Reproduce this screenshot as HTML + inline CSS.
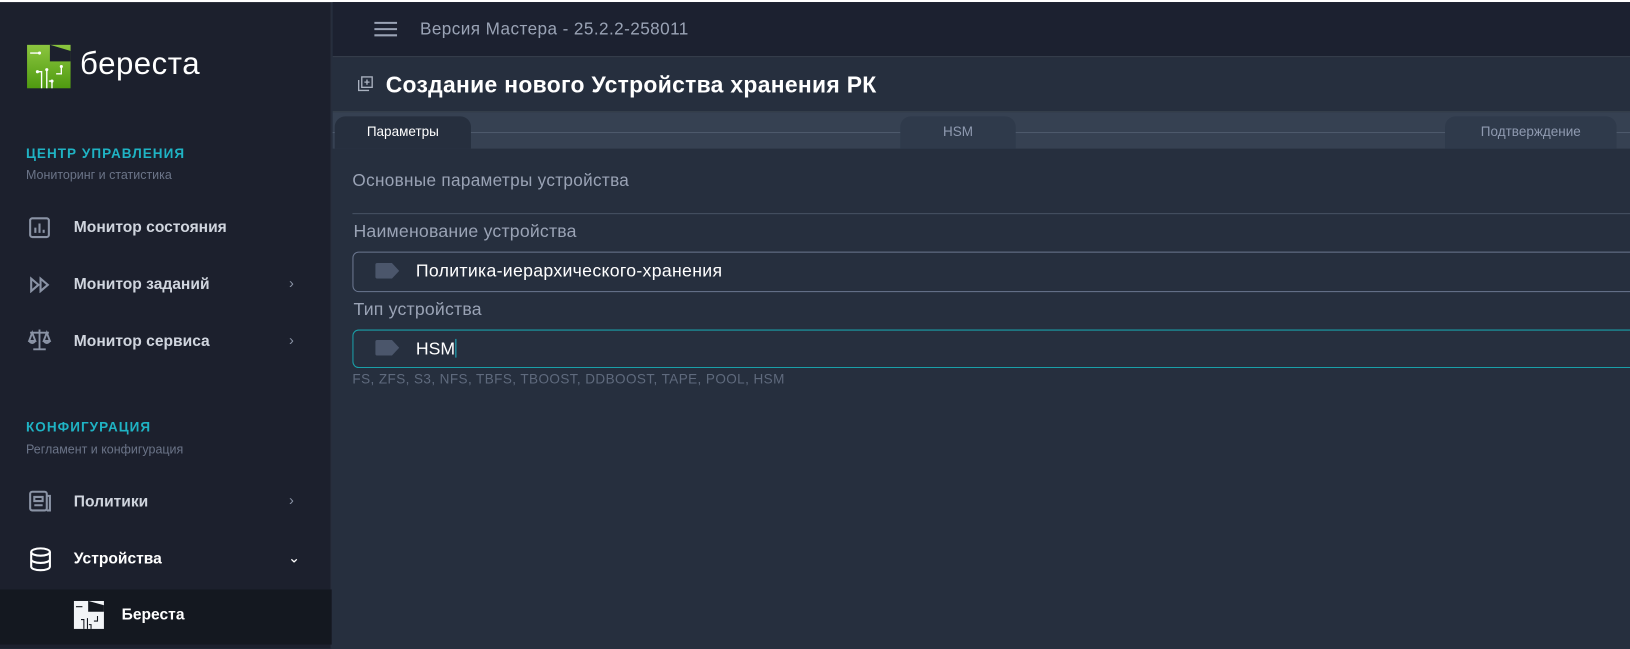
<!DOCTYPE html>
<html><head><meta charset="utf-8"><style>
*{margin:0;padding:0;box-sizing:border-box}
html,body{width:1630px;height:649px;overflow:hidden;background:#262f3e}
body{font-family:"Liberation Sans","DejaVu Sans",sans-serif;position:relative}
#wrap{position:absolute;left:0;top:0;width:1568px;height:624px;overflow:hidden;transform:scale(1.0396);transform-origin:0 0}
.abs{position:absolute}
#top{left:0;top:0;width:1568px;height:2px;background:#fff}
#side{left:0;top:2px;width:319px;height:622px;background:#1c202d;border-right:1px solid #2a3140}
#hdr{left:320px;top:2px;width:1248px;height:53px;background:#1c2130;border-bottom:1px solid #39414f}
#ttl{left:320px;top:56px;width:1248px;height:52px;background:#262f3e;border-bottom:1px solid #39434f}
#tabs{left:320px;top:108px;width:1248px;height:35px;background:#364152}
.tab{position:absolute;top:4px;height:31px;border-radius:10px 10px 0 0;text-align:center;font-size:13px;line-height:30px}
.sec{color:#1fb3c4;font-weight:bold;font-size:13px;letter-spacing:1px;left:25px}
.sub{color:#6b7488;font-size:12px;left:25px}
.item{left:71px;color:#d0d5de;font-size:15px;font-weight:bold}
.chev{left:278px;color:#8a93a5;font-size:14px}
.inp{left:339px;width:1240px;border-radius:6px;border:1px solid #6b7790}
</style></head><body><div id="wrap">
<div class="abs" id="side"></div>
<div class="abs" id="top"></div>
<svg class="abs" style="left:26px;top:43px" width="42" height="42" viewBox="0 0 42 42">
<defs><linearGradient id="g" x1="0" y1="0" x2="0" y2="1"><stop offset="0" stop-color="#8cc63f"/><stop offset="1" stop-color="#4f9a10"/></linearGradient></defs>
<rect width="42" height="42" fill="url(#g)"/>
<path d="M22 0L42 6V16H22Z" fill="#1c202d"/>
<g stroke="#fff" stroke-width="1.3" fill="none"><path d="M3 8H12M10 26H14V42M19 24V42M21 35H24V42M28 28H33V21"/></g>
<g fill="#fff"><circle cx="12" cy="8" r="1.5"/><circle cx="10" cy="26" r="1.5"/><circle cx="19" cy="24" r="1.5"/><circle cx="24" cy="35" r="1.5"/><circle cx="33" cy="21" r="1.5"/></g>
</svg>
<div class="abs" style="left:77px;top:45px;color:#fff;font-size:30px;letter-spacing:0.5px">береста</div>
<div class="abs sec" style="top:140px">ЦЕНТР УПРАВЛЕНИЯ</div>
<div class="abs sub" style="top:161px">Мониторинг и статистика</div>
<svg class="abs" style="left:27px;top:208px" width="22" height="22" viewBox="0 0 22 22" fill="none" stroke="#8a93a5" stroke-width="2"><rect x="2" y="2" width="18" height="18" rx="2"/><path d="M7 16V11M11 16V7M15 16V13"/></svg>
<div class="abs item" style="top:210px">Монитор состояния</div>
<svg class="abs" style="left:28px;top:266px" width="22" height="16" viewBox="0 0 22 16" fill="none" stroke="#8a93a5" stroke-width="2"><path d="M2 2V14L9 8Z M11 2V14L18 8Z"/></svg>
<div class="abs item" style="top:265px">Монитор заданий</div><div class="abs chev" style="top:264px">›</div>
<svg class="abs" style="left:26px;top:316px" width="24" height="22" viewBox="0 0 24 22" fill="none" stroke="#8a93a5" stroke-width="1.8"><path d="M12 1V20M6 20H18M3 4H21M5 4L2 12H8ZM19 4L16 12H22Z M2 12Q5 16 8 12M16 12Q19 16 22 12"/></svg>
<div class="abs item" style="top:320px">Монитор сервиса</div><div class="abs chev" style="top:319px">›</div>
<div class="abs sec" style="top:403px">КОНФИГУРАЦИЯ</div>
<div class="abs sub" style="top:425px">Регламент и конфигурация</div>
<svg class="abs" style="left:27px;top:471px" width="24" height="22" viewBox="0 0 24 22" fill="none" stroke="#8a93a5" stroke-width="2"><rect x="2" y="2" width="16" height="18" rx="2"/><path d="M18 6H21V20H18M6 7H14V11H6ZM6 15H14"/></svg>
<div class="abs item" style="top:474px">Политики</div><div class="abs chev" style="top:473px">›</div>
<svg class="abs" style="left:28px;top:526px" width="22" height="24" viewBox="0 0 22 24" fill="none" stroke="#fff" stroke-width="2"><ellipse cx="11" cy="5" rx="9" ry="3.5"/><path d="M2 5V19C2 21 6 22.5 11 22.5S20 21 20 19V5M2 12C2 14 6 15.5 11 15.5S20 14 20 12"/></svg>
<div class="abs item" style="top:529px;color:#fff">Устройства</div><div class="abs" style="left:277px;top:528px;color:#fff;font-size:14px">⌄</div>
<div class="abs" style="left:0;top:567px;width:319px;height:53px;background:#141820"></div>
<svg class="abs" style="left:71px;top:578px" width="29" height="27" viewBox="0 0 42 39"><rect width="42" height="39" fill="#f2f4f7"/><path d="M20 0L42 6V15H20Z" fill="#141820"/><g stroke="#141820" stroke-width="1.5" fill="none"><path d="M3 8H12M10 26H14V39M19 24V39M21 33H24V39M28 28H33V21"/></g></svg>
<div class="abs item" style="left:117px;top:583px;color:#fff">Береста</div>

<div class="abs" id="hdr"></div>
<svg class="abs" style="left:360px;top:20px" width="22" height="16" viewBox="0 0 22 16" stroke="#9aa3b5" stroke-width="2"><path d="M0 2H22M0 8H22M0 14H22"/></svg>
<div class="abs" style="left:404px;top:19px;color:#9aa3b5;font-size:16.5px;letter-spacing:0.4px">Версия Мастера - 25.2.2-258011</div>
<div class="abs" id="ttl"></div>
<svg class="abs" style="left:344px;top:73px" width="15" height="15" viewBox="0 0 15 15" fill="none" stroke="#aab2c0" stroke-width="1.3"><rect x="4" y="1" width="10" height="10"/><path d="M1 4V14H11M9 3.5V8.5M6.5 6H11.5"/></svg>
<div class="abs" style="left:371px;top:69px;color:#fff;font-size:22px;font-weight:bold;letter-spacing:0.3px">Создание нового Устройства хранения РК</div>
<div class="abs" id="tabs">
<div class="abs" style="left:0;top:19px;width:1248px;height:1px;background:#4e5a6c"></div>
<div class="tab" style="left:2px;width:131px;background:#262f3e;color:#fff">Параметры</div>
<div class="tab" style="left:546px;width:111px;background:#2f3a4b;color:#8f9ab0">HSM</div>
<div class="tab" style="left:1070px;width:165px;background:#2f3a4b;color:#8f9ab0">Подтверждение</div>
</div>
<div class="abs" style="left:339px;top:165px;color:#9aa3b5;font-size:16.5px;letter-spacing:0.3px">Основные параметры устройства</div>
<div class="abs" style="left:339px;top:205px;width:1229px;height:1px;background:#475163"></div>
<div class="abs" style="left:340px;top:213px;color:#9aa3b5;font-size:17px;letter-spacing:0.2px">Наименование устройства</div>
<div class="abs inp" style="top:242px;height:39px"></div>
<svg class="abs" style="left:361px;top:253px" width="23" height="15" viewBox="0 0 23 15"><path d="M2 0H16L23 7.5L16 15H2Q0 15 0 13V2Q0 0 2 0Z" fill="#4b566b"/></svg>
<div class="abs" style="left:400px;top:251px;color:#fff;font-size:17px;letter-spacing:0.3px">Политика-иерархического-хранения</div>
<div class="abs" style="left:340px;top:288px;color:#9aa3b5;font-size:17px;letter-spacing:0.2px">Тип устройства</div>
<div class="abs inp" style="top:317px;height:37px;border-color:#1a9fa8"></div>
<svg class="abs" style="left:361px;top:327px" width="23" height="15" viewBox="0 0 23 15"><path d="M2 0H16L23 7.5L16 15H2Q0 15 0 13V2Q0 0 2 0Z" fill="#4b566b"/></svg>
<div class="abs" style="left:400px;top:326px;color:#fff;font-size:17px">HSM<span style="display:inline-block;width:1px;height:18px;background:#1fb3c4;vertical-align:-3px"></span></div>
<div class="abs" style="left:339px;top:357px;color:#5f6a7d;font-size:13px;letter-spacing:0.4px">FS, ZFS, S3, NFS, TBFS, TBOOST, DDBOOST, TAPE, POOL, HSM</div>
</div></body></html>
